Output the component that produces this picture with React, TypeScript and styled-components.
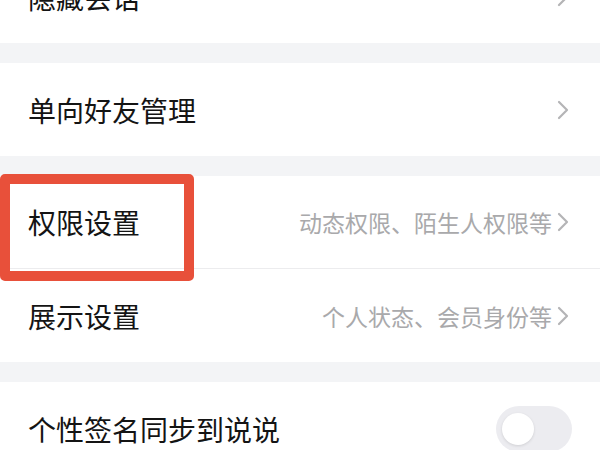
import styled, { createGlobalStyle } from "styled-components";

const GlobalStyle = createGlobalStyle`
  html, body {
    margin: 0;
    padding: 0;
    background: #f3f4f6;
    overflow: hidden;
    font-family: "Noto Sans CJK SC", "Noto Sans", sans-serif;
  }
`;

const Page = styled.div`
  width: 600px;
  margin-top: -50px;
  display: flex;
  flex-direction: column;
  gap: 20px;
  position: relative;
`;

const Section = styled.div`
  background: #ffffff;
  display: flex;
  flex-direction: column;
`;

const Row = styled.div<{ $divider?: boolean }>`
  position: relative;
  height: 93px;
  display: flex;
  align-items: center;
  justify-content: space-between;
  padding: 0 31px 0 28px;
  box-sizing: border-box;
  border-bottom: ${p => (p.$divider ? "1px solid #ececee" : "none")};
`;

const Title = styled.span`
  font-size: 28px;
  color: #141414;
`;

const Right = styled.div`
  display: flex;
  align-items: center;
  gap: 5px;
`;

const Sub = styled.span`
  font-size: 23px;
  color: #a9a9ab;
`;

const Toggle = styled.div`
  width: 76px;
  height: 46px;
  border-radius: 23px;
  background: #ececf0;
  display: flex;
  align-items: center;
  padding-left: 6px;
  box-sizing: border-box;
  margin-right: -3px;
`;

const Knob = styled.div`
  width: 32px;
  height: 32px;
  border-radius: 50%;
  background: #ffffff;
  box-shadow: 0 1px 3px rgba(0, 0, 0, 0.12);
`;

const Highlight = styled.div`
  position: absolute;
  left: 0;
  top: -2px;
  width: 194px;
  height: 107px;
  box-sizing: border-box;
  border: 10px solid #e8503a;
  border-radius: 5px;
  pointer-events: none;
`;

const Chevron = () => (
  <svg width="12" height="20" viewBox="0 0 12 20">
    <polyline
      points="2,2 10,10 2,18"
      fill="none"
      stroke="#b4b4b6"
      strokeWidth="2.2"
      strokeLinecap="round"
      strokeLinejoin="round"
    />
  </svg>
);

const App = () => {
  return (
    <>
      <GlobalStyle />
      <Page>
        <Section>
          <Row>
            <Title>隐藏会话</Title>
            <Chevron />
          </Row>
        </Section>
        <Section>
          <Row>
            <Title>单向好友管理</Title>
            <Chevron />
          </Row>
        </Section>
        <Section>
          <Row $divider>
            <Title>权限设置</Title>
            <Right>
              <Sub>动态权限、陌生人权限等</Sub>
              <Chevron />
            </Right>
            <Highlight />
          </Row>
          <Row>
            <Title>展示设置</Title>
            <Right>
              <Sub>个人状态、会员身份等</Sub>
              <Chevron />
            </Right>
          </Row>
        </Section>
        <Section>
          <Row>
            <Title>个性签名同步到说说</Title>
            <Toggle>
              <Knob />
            </Toggle>
          </Row>
        </Section>
      </Page>
    </>
  );
};

export default App;
